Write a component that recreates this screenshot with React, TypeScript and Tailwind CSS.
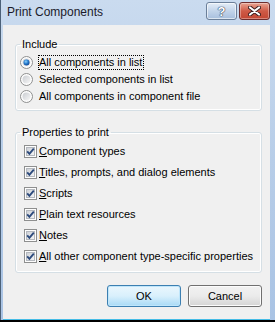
import React from "react";

const font = "[font-family:'Liberation_Sans',Arial,sans-serif]";

function Radio({ checked }: { checked?: boolean }) {
  return (
    <svg width="13" height="13" viewBox="0 0 13 13" className="shrink-0">
      <defs>
        <linearGradient id="rb" x1="0" y1="0" x2="1" y2="1">
          <stop offset="0" stopColor="#c9ccd1" />
          <stop offset="1" stopColor="#f7f7f7" />
        </linearGradient>
        <radialGradient id="rd" cx="0.4" cy="0.35" r="0.7">
          <stop offset="0" stopColor="#8fd1fb" />
          <stop offset="0.5" stopColor="#2a7fd0" />
          <stop offset="1" stopColor="#0c3f8c" />
        </radialGradient>
      </defs>
      <circle cx="6.5" cy="6.5" r="6" fill="#fdfdfd" stroke="#8e8f8f" />
      <circle cx="6.5" cy="6.5" r="4" fill="url(#rb)" />
      {checked && <circle cx="6.5" cy="6.5" r="3" fill="url(#rd)" />}
    </svg>
  );
}

function Check() {
  return (
    <svg width="13" height="13" viewBox="0 0 13 13" className="shrink-0">
      <defs>
        <linearGradient id="cb" x1="0" y1="0" x2="1" y2="1">
          <stop offset="0" stopColor="#cbcfd5" />
          <stop offset="1" stopColor="#f6f6f6" />
        </linearGradient>
      </defs>
      <rect x="0.5" y="0.5" width="12" height="12" fill="#fdfdfd" stroke="#8e8f8f" />
      <rect x="2.5" y="2.5" width="8" height="8" fill="url(#cb)" stroke="#b4b8be" />
      <path d="M3.2 6.4 L5.4 8.8 L9.8 3.6" fill="none" stroke="#2c4a7c" strokeWidth="1.9" />
    </svg>
  );
}

function CheckRow({ k, rest }: { k: string; rest: string }) {
  return (
    <div className="flex h-[21px] items-center gap-[2px]">
      <Check />
      <span>
        <span className="underline underline-offset-[1px]">{k}</span>
        {rest}
      </span>
    </div>
  );
}

export default function App() {
  return (
    <div className={`flex h-[322px] w-[275px] flex-col bg-black text-[11px] leading-[13px] text-black ${font}`}>
      <div className="flex h-[320px] flex-col border-l border-[#4c6178] bg-gradient-to-b from-[#cadbef] via-[#b7cde8] to-[#a9c3e4] pl-[2px] pr-[5px]">
        {/* title bar */}
        <div className="flex h-[25px] shrink-0 items-start">
          <span className="mt-[5px] ml-[4px] text-[12px] leading-[15px] text-[#1b1b2b]">Print Components</span>
          <div className="ml-auto mt-[2px] flex gap-[2px]">
            <div className="flex h-[18px] w-[31px] items-center justify-center rounded-[3px] border border-[#6b7f99] bg-gradient-to-b from-[#e4edf7] via-[#c2d4ea] to-[#a7bfdd] shadow-[inset_0_0_0_1px_rgba(255,255,255,0.6)]">
              <span className="text-[13px] font-bold leading-none text-white [text-shadow:0_0_1px_#2b3d58,0_0_1px_#2b3d58,0_0_1px_#2b3d58]">?</span>
            </div>
            <div className="flex h-[18px] w-[31px] items-center justify-center rounded-[3px] border border-[#6e2d2d] bg-gradient-to-b from-[#e8a493] via-[#cf5a46] to-[#c24632] shadow-[inset_0_0_0_1px_rgba(255,255,255,0.35)]">
              <svg width="13" height="10" viewBox="0 0 13 10">
                <path d="M2 1.5 L11 8.5 M11 1.5 L2 8.5" stroke="#3b1f1f" strokeWidth="4" strokeLinecap="round" />
                <path d="M2 1.5 L11 8.5 M11 1.5 L2 8.5" stroke="#ffffff" strokeWidth="2.2" strokeLinecap="round" />
              </svg>
            </div>
          </div>
        </div>

        {/* client area */}
        <div className="flex flex-1 flex-col border-b border-[#45bce6] bg-[#f0f0f0] pl-[12px] pr-[8px]">
          <fieldset className="mt-[12px] rounded-[3px] border border-[#d5dfe5] pl-[4px] pb-[5px] shadow-[inset_0_0_0_1px_#ffffff]">
            <legend className="px-[2px] leading-[14px]">Include</legend>
            <div className="mt-[3px] flex flex-col">
              <div className="flex h-[17px] items-center gap-[5px]">
                <Radio checked />
                <span className="border border-dotted border-black pr-[1px]">All components in list</span>
              </div>
              <div className="flex h-[17px] items-center gap-[6px]">
                <Radio />
                <span>Selected components in list</span>
              </div>
              <div className="flex h-[17px] items-center gap-[6px]">
                <Radio />
                <span>All components in component file</span>
              </div>
            </div>
          </fieldset>

          <fieldset className="mt-[14px] rounded-[3px] border border-[#d5dfe5] pl-[8px] pb-[5px] shadow-[inset_0_0_0_1px_#ffffff]">
            <legend className="-ml-[4px] px-[2px] leading-[14px]">Properties to print</legend>
            <div className="mt-[2px] flex flex-col">
              <CheckRow k="C" rest="omponent types" />
              <CheckRow k="T" rest="itles, prompts, and dialog elements" />
              <CheckRow k="S" rest="cripts" />
              <CheckRow k="P" rest="lain text resources" />
              <CheckRow k="N" rest="otes" />
              <CheckRow k="A" rest="ll other component type-specific properties" />
            </div>
          </fieldset>

          <div className="mt-[12px] flex justify-end gap-[7px]">
            <button className="h-[22px] w-[74px] rounded-[3px] border border-[#3c7fb1] bg-gradient-to-b from-[#eaf6fd] via-[#d9f0fc] to-[#a7d9f5] shadow-[inset_0_0_0_1px_#bfe6fb]">
              OK
            </button>
            <button className="h-[22px] w-[74px] rounded-[3px] border border-[#707070] bg-gradient-to-b from-[#f2f2f2] via-[#ebebeb] to-[#d4d4d4] shadow-[inset_0_0_0_1px_#fcfcfc]">
              Cancel
            </button>
          </div>
        </div>
      </div>
    </div>
  );
}
